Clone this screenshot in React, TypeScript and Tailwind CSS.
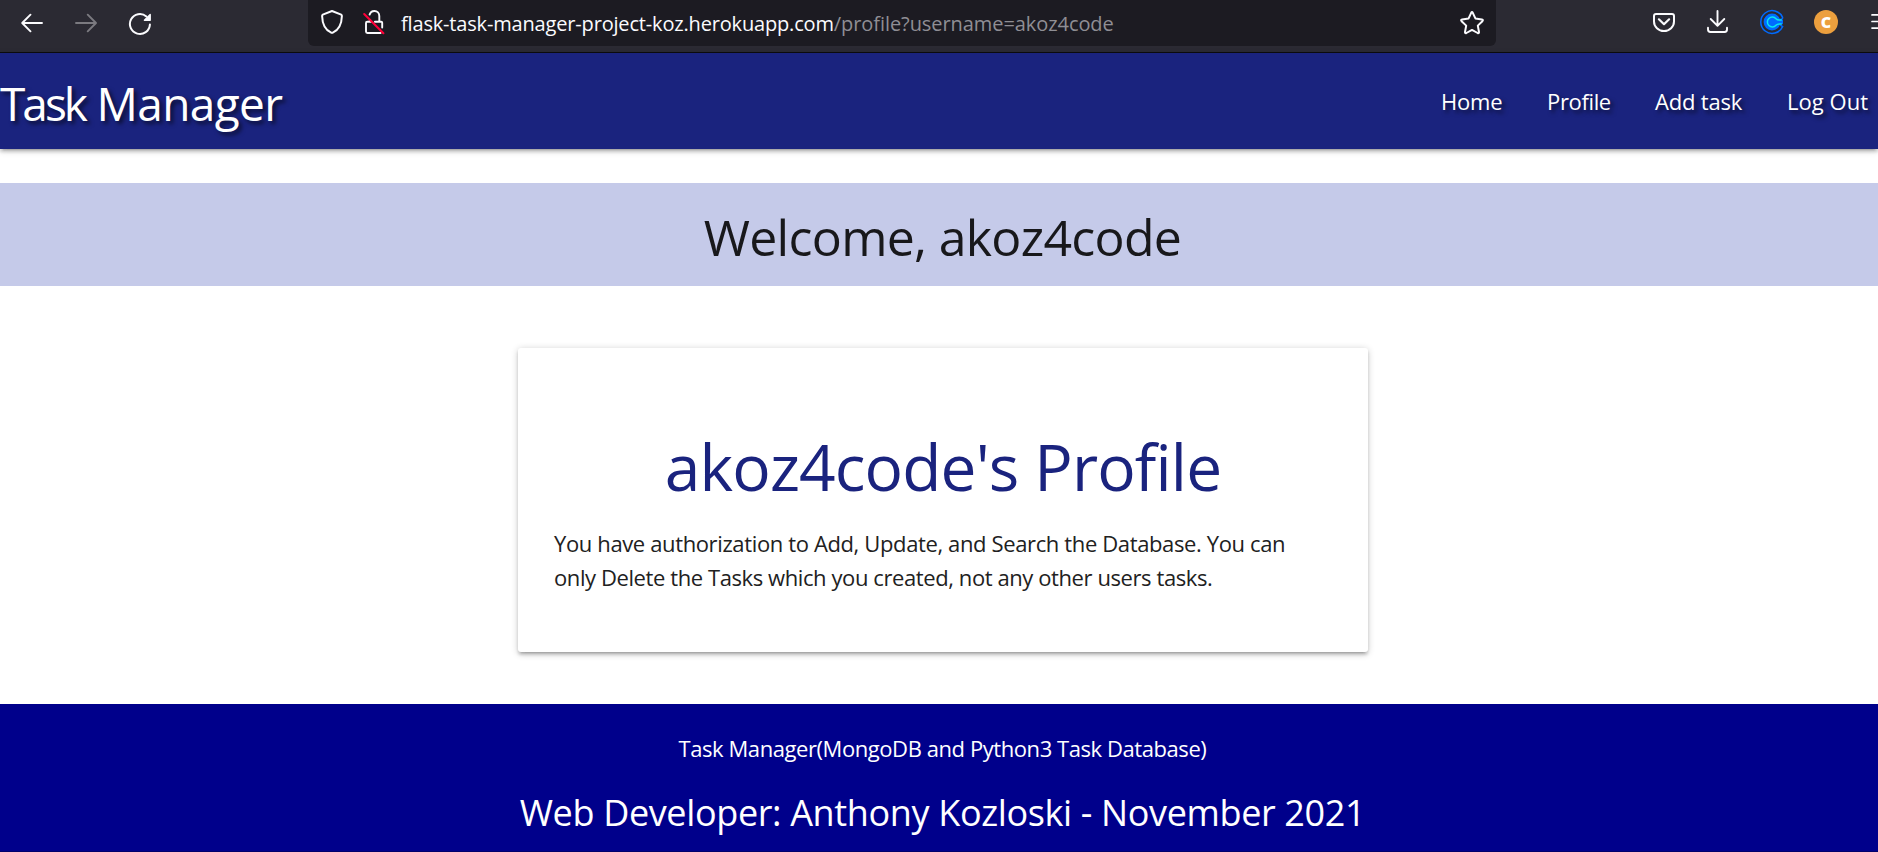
const links = [
  { label: "Home", cls: "w-[106px] tracking-[-0.2px]" },
  { label: "Profile", cls: "w-[108px] tracking-[-0.35px]" },
  { label: "Add task", cls: "w-[132px] tracking-[-0.2px]" },
  { label: "Log Out", cls: "w-[91px] tracking-[0.05px]" },
];

function BrowserBar() {
  return (
    <div className="flex h-[53px] w-full items-start overflow-hidden border-b border-[#0c0c0d] bg-[#2b2a33]">
      <svg className="ml-5 h-[46px] w-[25px] shrink-0" viewBox="20 0 25 46" fill="none" stroke="#fbfbfe" strokeWidth="1.9" strokeLinecap="round" strokeLinejoin="round">
        <path d="M42 23H22.5M30.5 14.7L22.2 23L30.5 31.3" />
      </svg>
      <svg className="ml-[29px] h-[46px] w-[25px] shrink-0" viewBox="74 0 25 46" fill="none" stroke="#7b7a80" strokeWidth="1.9" strokeLinecap="round" strokeLinejoin="round">
        <path d="M76 23H95.5M87.7 14.7L96 23L87.7 31.3" />
      </svg>
      <svg className="ml-[29px] h-[46px] w-[26px] shrink-0" viewBox="128 0 26 46" fill="none" stroke="#fbfbfe" strokeWidth="2" strokeLinecap="round" strokeLinejoin="round">
        <path d="M149.9 24.6A10 10 0 1 1 146.4 16.4" />
        <path d="M150.2 14.4V20.2H144.4Z" fill="#fbfbfe" strokeWidth="1.4" />
      </svg>

      <div className="ml-[154px] flex h-[46px] w-[1188px] shrink-0 items-start rounded-b-md bg-[#1c1b22]">
        <svg className="ml-3 h-[46px] w-6 shrink-0" viewBox="320 0 24 46" fill="none" stroke="#fbfbfe" strokeWidth="2" strokeLinecap="round" strokeLinejoin="round">
          <path d="M332 11L341.2 14.6Q341.9 15 341.9 16C341.7 23.2 339.6 29.6 332.8 32.7Q332 33 331.2 32.7C324.4 29.6 322.3 23.2 322.1 16Q322.1 15 322.8 14.6Z" />
        </svg>
        <svg className="ml-[18px] h-[46px] w-6 shrink-0" viewBox="362 0 24 46" fill="none" stroke="#fbfbfe" strokeWidth="1.9" strokeLinecap="round" strokeLinejoin="round">
          <path d="M369.6 14.6C370.3 12.4 372.2 11 374.4 11C377.3 11 379.3 13.2 379.3 16V21.8M374.9 21.8H381.2Q382.2 21.8 382.2 22.8V27.5M369.8 20V21.8M371 21.8H367.2Q366 21.8 366 23V31.6Q366 33 367.4 33H380.6" />
          <path d="M364.2 14L383.4 33.2" stroke="#ff0039" strokeWidth="2.1" />
        </svg>
        <div className="ml-[15px] w-[1050px] whitespace-nowrap font-['Open_Sans',sans-serif] text-[20px] leading-[48px] text-[#fbfbfe]">
          <span className="tracking-[-0.17px]">flask-task-manager-project-koz.herokuapp.com</span>
          <span className="tracking-[-0.07px] text-[#8f8e94]">/profile?username=akoz4code</span>
        </div>
        <svg className="ml-2 h-[46px] w-[26px] shrink-0" viewBox="1459 0 26 46" fill="none" stroke="#fbfbfe" strokeWidth="2" strokeLinejoin="round">
          <path d="M1471.2 12.8Q1472 11.4 1472.8 12.8L1475.4 18.4L1481.9 19.4Q1483.6 19.8 1482.4 21.2L1477.8 25.6L1479 32Q1479.1 33.6 1477.6 33L1472 29.9L1466.4 33Q1464.9 33.6 1465 32L1466.2 25.6L1461.6 21.2Q1460.4 19.8 1462.1 19.4L1468.6 18.4Z" />
        </svg>
      </div>

      <svg className="ml-[155px] h-[46px] w-[26px] shrink-0" viewBox="1651 0 26 46" fill="none" stroke="#fbfbfe" strokeWidth="2" strokeLinecap="round" strokeLinejoin="round">
        <path d="M1656 14H1672Q1674 14 1674 16V21.4A10 9.6 0 0 1 1654 21.4V16Q1654 14 1656 14Z" />
        <path d="M1658.9 19.3L1664 24.2L1669.1 19.3" strokeWidth="2.2" />
      </svg>
      <svg className="ml-[29px] h-[46px] w-6 shrink-0" viewBox="1706 0 24 46" fill="none" stroke="#fbfbfe" strokeWidth="1.9" strokeLinecap="round" strokeLinejoin="round">
        <path d="M1717.5 11V25.2M1710.7 19L1717.5 25.8L1724.3 19M1708 27.8V29.6Q1708 32 1710.4 32H1724.6Q1727 32 1727 29.6V27.8" />
      </svg>
      <svg className="ml-[29px] h-[46px] w-[26px] shrink-0" viewBox="1759 0 26 46" fill="none">
        <path d="M1782.6 17.4A11.4 11.4 0 1 0 1782.6 26.6L1780.8 25.4M1782.6 17.4Q1782.6 19.3 1780.2 19.6" stroke="#006bff" strokeWidth="1.5" strokeLinecap="round" />
        <circle cx="1772" cy="22" r="8.4" fill="#006bff" />
        <path d="M1776 19.8H1783V24.2H1776Z" fill="#006bff" />
        <path d="M1781.2 19.9Q1777.6 20.6 1776 18.8A4.9 4.9 0 1 0 1776 25.2Q1777.6 23.4 1781.2 24.1" stroke="#0ae8f0" strokeWidth="1.5" strokeLinecap="round" />
      </svg>
      <div className="ml-[29px] mt-[10px] flex h-6 w-6 shrink-0 items-center justify-center rounded-full bg-[#ec9f3e] font-['Open_Sans',sans-serif] text-[16px] font-extrabold leading-none text-white">
        C
      </div>
      <svg className="ml-[33px] h-[46px] w-[7px] shrink-0" viewBox="1871 0 7 46" stroke="#fbfbfe" strokeWidth="1.7" strokeLinecap="round">
        <path d="M1872 14.9H1890M1872 21.5H1890M1872 28.1H1890" />
      </svg>
    </div>
  );
}

export default function App() {
  return (
    <div className="flex h-[852px] w-full flex-col overflow-hidden bg-white font-['Open_Sans','Noto_Sans',sans-serif] text-[#212121]">
      <BrowserBar />

      <nav className="flex h-24 shrink-0 items-start justify-between bg-[#1a237e] text-white shadow-[0_3px_3px_0_rgba(0,0,0,0.14),0_4.5px_1.5px_-3px_rgba(0,0,0,0.12),0_1.5px_7.5px_0_rgba(0,0,0,0.2)] [text-shadow:3px_3px_4px_rgba(0,0,0,0.6)]">
        <a className="whitespace-nowrap pt-[1px] text-[46px] font-[380] leading-[99px] tracking-[-3px] [word-spacing:2.5px]">
          Task <span className="tracking-[-0.6px]">Manager</span>
        </a>
        <ul className="flex text-[22px] leading-[97px]">
          {links.map((l) => (
            <li key={l.label} className={`${l.cls} whitespace-nowrap`}>{l.label}</li>
          ))}
        </ul>
      </nav>

      <h3 className="mt-[34px] h-[103px] shrink-0 whitespace-nowrap bg-[#c5cae9] pl-[7px] text-center text-[50px] font-[380] leading-[109px] tracking-[-0.7px] text-[#18181b]">
        Welcome, akoz4code
      </h3>

      <section className="ml-[518px] mt-[62px] flex h-[304px] w-[850px] shrink-0 flex-col rounded-[3px] bg-white pl-9 shadow-[0_3px_3px_0_rgba(0,0,0,0.14),0_4.5px_1.5px_-3px_rgba(0,0,0,0.12),0_1.5px_7.5px_0_rgba(0,0,0,0.2)]">
        <h2 className="mt-[83px] pr-9 text-center text-[64px] font-[390] leading-[72px] tracking-[-0.85px] text-[#1a237e]">
          akoz4code's Profile
        </h2>
        <p className="mt-[23px] whitespace-nowrap text-[22px] leading-[34px] tracking-[-0.37px]">
          You have authorization to Add, Update, and Search the Database. You can
          <br />
          <span className="tracking-[-0.41px]">only Delete the Tasks which you created, not any other users tasks.</span>
        </p>
      </section>

      <footer className="mt-[52px] flex h-[148px] shrink-0 flex-col items-center whitespace-nowrap border-b border-[#00006b] bg-[#00008b] pl-[7px] text-white">
        <p className="mt-[27px] text-[22px] leading-[34px] tracking-[-0.43px]">Task Manager(MongoDB and Python3 Task Database)</p>
        <h5 className="mt-[28px] text-[36px] font-[380] leading-[40px] tracking-[-0.36px]">Web Developer: Anthony Kozloski - November 2021</h5>
      </footer>
    </div>
  );
}
